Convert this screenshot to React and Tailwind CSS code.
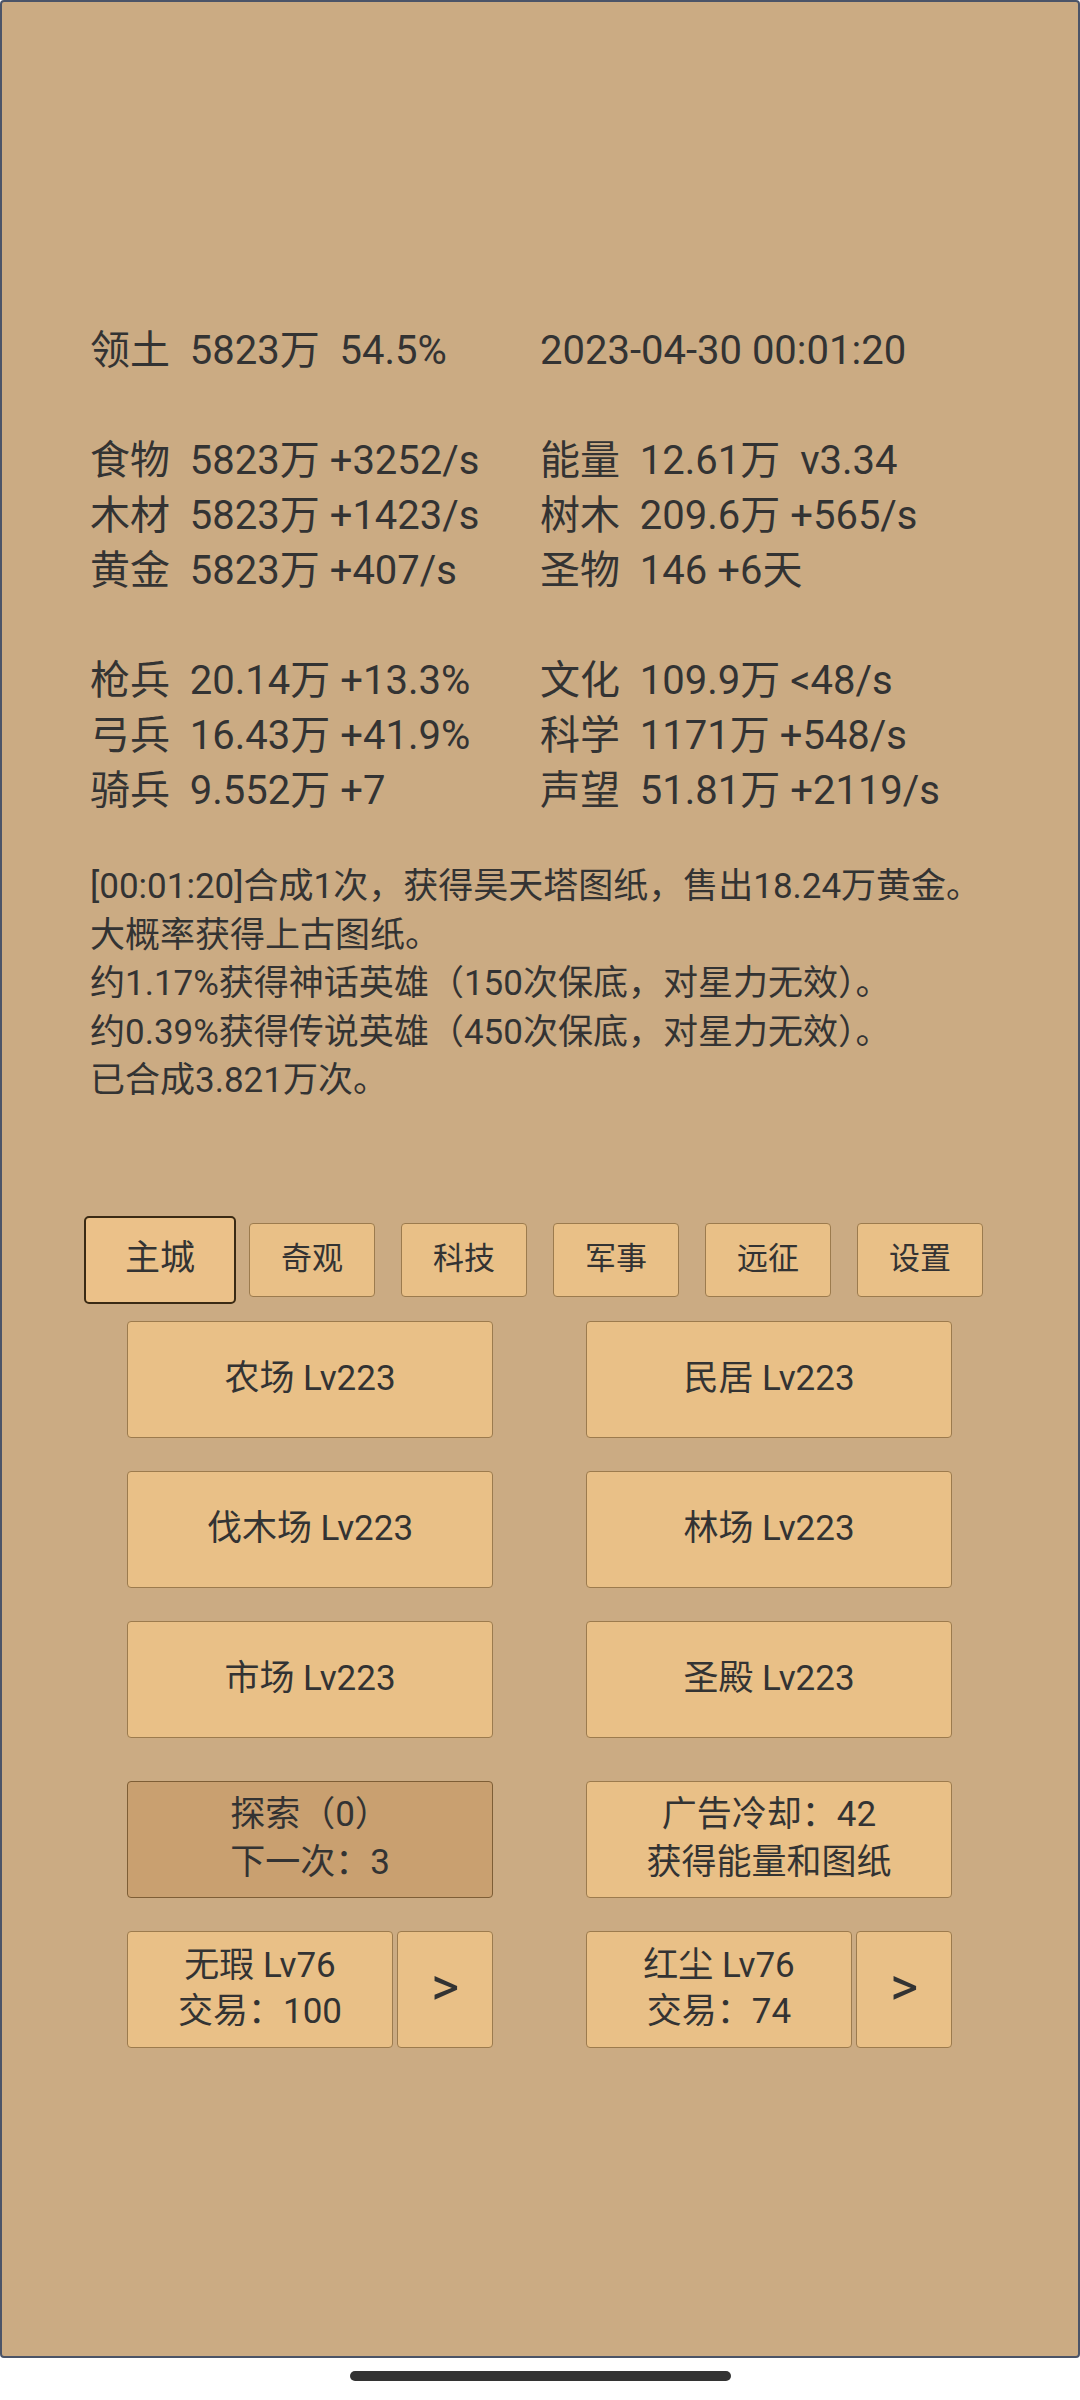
import React from 'react';

const stats = [
  ['领土  5823万  54.5%', '2023-04-30 00:01:20'],
  null,
  ['食物  5823万 +3252/s', '能量  12.61万  v3.34'],
  ['木材  5823万 +1423/s', '树木  209.6万 +565/s'],
  ['黄金  5823万 +407/s', '圣物  146 +6天'],
  null,
  ['枪兵  20.14万 +13.3%', '文化  109.9万 <48/s'],
  ['弓兵  16.43万 +41.9%', '科学  1171万 +548/s'],
  ['骑兵  9.552万 +7', '声望  51.81万 +2119/s'],
];

const logLines = [
  '[00:01:20]合成1次，获得昊天塔图纸，售出18.24万黄金。',
  '大概率获得上古图纸。',
  '约1.17%获得神话英雄（150次保底，对星力无效）。',
  '约0.39%获得传说英雄（450次保底，对星力无效）。',
  '已合成3.821万次。',
];

const tabs = ['奇观', '科技', '军事', '远征', '设置'];

const buildings = ['农场 Lv223', '民居 Lv223', '伐木场 Lv223', '林场 Lv223', '市场 Lv223', '圣殿 Lv223'];

const btn = 'bg-[#E9C087] border border-[#9C7B4E] rounded-[4px] flex items-center justify-center text-[#333333]';

const TradeButton = ({ name, trade }) => (
  <div className="flex gap-[4px] h-[117px]">
    <div className={`${btn} w-[266px] flex-col text-[35px] leading-[46px]`}>
      <span>{name}</span>
      <span>{trade}</span>
    </div>
    <div className={`${btn} w-[96px] text-[54px] leading-none pb-[4px]`}>&gt;</div>
  </div>
);

export default function App() {
  return (
    <div className="w-[1080px] h-[2400px] bg-white font-['Roboto','Noto_Sans_CJK_SC',sans-serif] text-[#333333]">
      <div className="h-[2358px] bg-[#CBAB83] border-2 border-[#4B5468] rounded-[4px] pt-[321px]">
        {/* stats */}
        <div className="pl-[88px] text-[40px] leading-[55px] whitespace-pre">
          {stats.map((row, i) =>
            row ? (
              <div key={i} className="grid grid-cols-[450px_1fr]">
                <span>{row[0]}</span>
                <span>{row[1]}</span>
              </div>
            ) : (
              <div key={i} className="h-[55px]" />
            )
          )}
        </div>

        {/* log */}
        <div className="pl-[88px] mt-[45px] text-[35px] leading-[48.5px]">
          {logLines.map((l) => (
            <div key={l}>{l}</div>
          ))}
        </div>

        {/* tabs */}
        <div className="mt-[110px] ml-[82px] w-[912px] h-[88px] grid grid-cols-6 items-center">
          <div className="h-[88px] bg-[#EBC189] border-2 border-[#3A2A14] rounded-[5px] flex items-center justify-center text-[35px]">
            主城
          </div>
          {tabs.map((t) => (
            <div key={t} className="flex justify-center">
              <div className={`${btn} w-[126px] h-[74px] text-[31px]`}>{t}</div>
            </div>
          ))}
        </div>

        {/* buildings */}
        <div className="mt-[17px] ml-[125px] grid grid-cols-[366px_366px] gap-x-[93px] gap-y-[33px]">
          {buildings.map((b) => (
            <div key={b} className={`${btn} h-[117px] text-[35px]`}>
              {b}
            </div>
          ))}
        </div>

        <div className="mt-[43px] ml-[125px] grid grid-cols-[366px_366px] gap-x-[93px] gap-y-[33px]">
          <div className="h-[117px] bg-[#C9A070] border border-[#7E5E36] rounded-[4px] flex flex-col items-center justify-center text-[35px] leading-[48px]">
            <span>探索（0）</span>
            <span>下一次：3</span>
          </div>
          <div className={`${btn} h-[117px] flex-col text-[35px] leading-[48px]`}>
            <span>广告冷却：42</span>
            <span>获得能量和图纸</span>
          </div>
          <TradeButton name="无瑕 Lv76" trade="交易：100" />
          <TradeButton name="红尘 Lv76" trade="交易：74" />
        </div>
      </div>

      {/* home indicator */}
      <div className="flex justify-center pt-[13px]">
        <div className="w-[381px] h-[10px] rounded-full bg-[#333333]" />
      </div>
    </div>
  );
}
